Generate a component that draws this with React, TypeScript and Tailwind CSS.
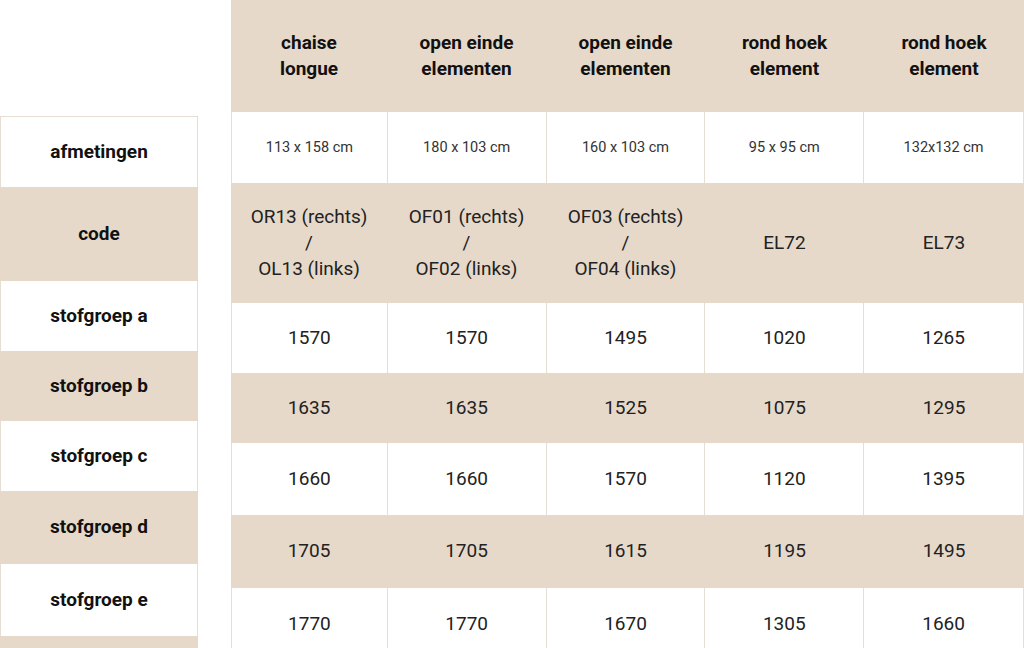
import React from "react";

// Prijstabel per stofgroep
const COLS = ["w-[156px]", "w-[159px]", "w-[159px]", "w-[159px]", "w-[160px]"];

const HEADERS: string[][] = [
  ["chaise", "longue"],
  ["open einde", "elementen"],
  ["open einde", "elementen"],
  ["rond hoek", "element"],
  ["rond hoek", "element"],
];

const SIZES = ["113 x 158 cm", "180 x 103 cm", "160 x 103 cm", "95 x 95 cm", "132x132 cm"];

const CODES: string[][] = [
  ["OR13 (rechts)", "/", "OL13 (links)"],
  ["OF01 (rechts)", "/", "OF02 (links)"],
  ["OF03 (rechts)", "/", "OF04 (links)"],
  ["EL72"],
  ["EL73"],
];

const PRICES: { label: string; values: string[]; left: string; right: string }[] = [
  { label: "stofgroep a", values: ["1570", "1570", "1495", "1020", "1265"], left: "h-[70px]", right: "h-[70px]" },
  { label: "stofgroep b", values: ["1635", "1635", "1525", "1075", "1295"], left: "h-[70px]", right: "h-[70px]" },
  { label: "stofgroep c", values: ["1660", "1660", "1570", "1120", "1395"], left: "h-[70px]", right: "h-[72px]" },
  { label: "stofgroep d", values: ["1705", "1705", "1615", "1195", "1495"], left: "h-[73px]", right: "h-[73px]" },
  { label: "stofgroep e", values: ["1770", "1770", "1670", "1305", "1660"], left: "h-[72px]", right: "h-[72px]" },
];

function LeftCell({ label, beige, h }: { label: string; beige: boolean; h: string }) {
  return (
    <div
      className={`${h} flex items-center justify-center text-[19px] font-bold text-[#111] ${
        beige ? "bg-[#e6d9ca]" : "bg-white border-x border-[#e6ddd3]"
      }`}
    >
      {label}
    </div>
  );
}

export default function App() {
  return (
    <div className="w-[1024px] h-[648px] overflow-hidden bg-white flex gap-[33px]" style={{ fontFamily: "Roboto, 'Noto Sans', sans-serif" }}>
      {/* labels */}
      <div className="w-[198px] shrink-0 pt-[116px]">
        <div className="border-t border-[#e6ddd3]">
          <LeftCell label="afmetingen" beige={false} h="h-[70px]" />
        </div>
        <LeftCell label="code" beige h="h-[94px]" />
        {PRICES.map((p, i) => (
          <LeftCell key={p.label} label={p.label} beige={i % 2 === 1} h={p.left} />
        ))}
        <LeftCell label="" beige h="h-[72px]" />
      </div>

      {/* table */}
      <div className="w-[793px] shrink-0">
        <div className="flex h-[112px] bg-[#e6d9ca]">
          {HEADERS.map((h, i) => (
            <div key={i} className={`${COLS[i]} flex flex-col items-center justify-center text-[19px] leading-[26px] font-bold text-[#111]`}>
              {h.map((l, j) => (
                <span key={j}>{l}</span>
              ))}
            </div>
          ))}
        </div>
        <div className="flex h-[71px] bg-white border-r border-[#e6ddd3]">
          {SIZES.map((s, i) => (
            <div key={i} className={`${COLS[i]} border-l border-[#e6ddd3] flex items-center justify-center text-[14.5px] text-[#333]`}>
              {s}
            </div>
          ))}
        </div>
        <div className="flex h-[120px] bg-[#e6d9ca]">
          {CODES.map((c, i) => (
            <div key={i} className={`${COLS[i]} flex flex-col items-center justify-center text-[19px] leading-[26px] text-[#222]`}>
              {c.map((l, j) => (
                <span key={j}>{l}</span>
              ))}
            </div>
          ))}
        </div>
        {PRICES.map((p, r) => (
          <div key={p.label} className={`flex ${p.right} ${r % 2 === 1 ? "bg-[#e6d9ca]" : "bg-white border-r border-[#e6ddd3]"}`}>
            {p.values.map((v, i) => (
              <div
                key={i}
                className={`${COLS[i]} flex items-center justify-center text-[19px] text-[#222] ${r % 2 === 1 ? "" : "border-l border-[#e6ddd3]"}`}
              >
                {v}
              </div>
            ))}
          </div>
        ))}
      </div>
    </div>
  );
}
